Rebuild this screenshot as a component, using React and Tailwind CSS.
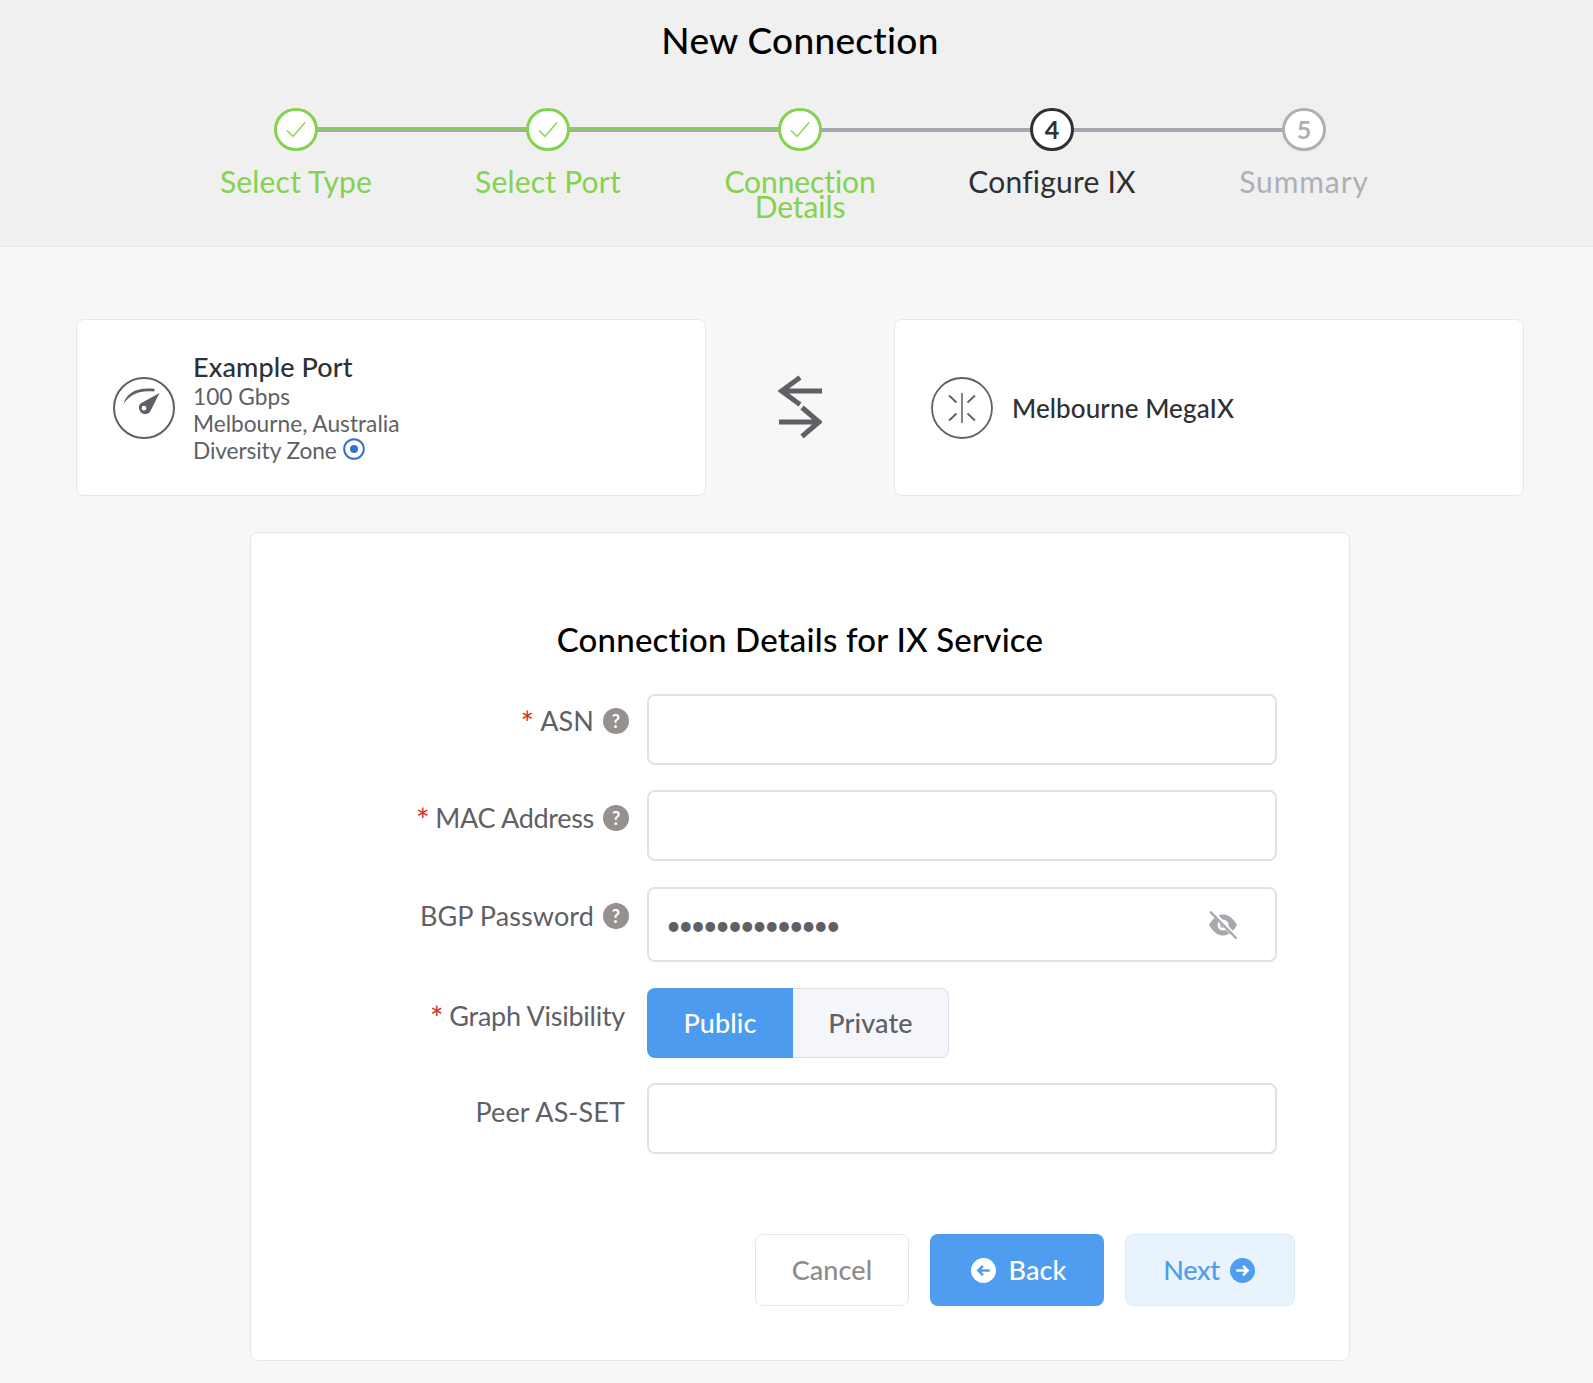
import React from "react";

function Check() {
  return (
    <svg width="20" height="18" viewBox="0 0 20 18" fill="none" stroke="#85d24f" strokeWidth="1.4">
      <path d="M1 9.5 L7 15.5 L19 1.5" />
    </svg>
  );
}

function Step({ label, state, n, line, track = "tracking-[0.2px]" }) {
  const circle =
    state === "done"
      ? "border-[#85d24f]"
      : state === "active"
      ? "border-[#2f3033] text-[#2f3033]"
      : "border-[#aeb0b8] text-[#aeb0b8]";
  const text =
    state === "done" ? "text-[#85d24f]" : state === "active" ? "text-[#2f3033]" : "text-[#aeb0b8]";
  return (
    <div className="relative w-[252px] flex flex-col items-center">
      {line && (
        <>
          <div className="absolute left-[126px] top-[20px] h-[4px] w-[252px] bg-[#a6a8b0]" />
          {line === "done" && <div className="absolute left-[126px] top-[19px] h-[3px] w-[252px] bg-[#85d24f]" />}
        </>
      )}
      <div className={`relative z-10 w-[44px] h-[43px] rounded-full border-[3px] bg-white flex items-center justify-center text-[25px] font-bold ${circle}`}>
        {state === "done" ? <Check /> : n}
      </div>
      <div className={`mt-[18px] w-[170px] text-center text-[30px] leading-[25px] ${track} ${text}`}>{label}</div>
    </div>
  );
}

function Gauge() {
  return (
    <svg width="62" height="62" viewBox="0 0 62 62" fill="none" className="shrink-0">
      <circle cx="31" cy="31" r="30" stroke="#5f6066" strokeWidth="2" />
      <path d="M10.5 27 C13 17 23 9.5 42 12 L41 14.5 C27 13 17 17 10.5 27 Z" fill="#5f6066" />
      <path fillRule="evenodd" d="M46.5 16 L37 35 A6 6 0 1 1 27.5 26.5 Z M31 28.8 A2.4 2.4 0 1 0 31 33.6 A2.4 2.4 0 1 0 31 28.8 Z" fill="#5f6066" />
    </svg>
  );
}

function IxIcon() {
  return (
    <svg width="62" height="62" viewBox="0 0 62 62" fill="none" className="shrink-0">
      <circle cx="31" cy="31" r="30" stroke="#5f6066" strokeWidth="1.8" />
      <path d="M31 16 V46" stroke="#77787e" strokeWidth="1.8" />
      <path d="M18 18.5 L25.5 25.5 M44 18.5 L36.5 25.5 M18 43.5 L25.5 36.5 M44 43.5 L36.5 36.5" stroke="#5f6066" strokeWidth="1.8" />
    </svg>
  );
}

function Arrows() {
  return (
    <svg width="44" height="64" viewBox="0 0 44 64" fill="none" stroke="#5f6066" strokeWidth="5" className="mb-[3px]">
      <path d="M3.5 17 H44 M22 3.5 L3.5 17 L22 30.5" />
      <path d="M1 48 H41 M24 33.5 L41 48 L24 62.5" />
    </svg>
  );
}

function Help() {
  return (
    <span className="w-[26px] h-[26px] shrink-0 -mr-[4px] rounded-full bg-[#96908e] text-white text-[18px] font-bold flex items-center justify-center leading-none">?</span>
  );
}

function Field({ label, required, help, top, track = "tracking-[0.1px]", children }) {
  return (
    <div className="flex">
      <div className={`w-[374px] shrink-0 flex justify-end items-center gap-[9px] h-[26px] text-[27px] leading-[26px] text-[#5f6066] ${track} ${top}`}>
        <span className="whitespace-nowrap flex items-center">
          {required && <span className="text-[#d8322a] text-[32px] leading-none mt-[4px] mr-[6px]">*</span>}
          {label}
        </span>
        {help && <Help />}
      </div>
      <div className="ml-[22px] w-[630px]">{children}</div>
    </div>
  );
}

function TextBox() {
  return <input className="block w-full h-[71px] rounded-[8px] border-2 border-[#e0e1e8] bg-white outline-none" />;
}

function EyeOff() {
  return (
    <svg width="30" height="28" viewBox="0 0 30 28" fill="none">
      <path d="M1 14 C6 5.5 11 3.5 15 3.5 C19 3.5 24 5.5 29 14 C24 22.5 19 24.5 15 24.5 C11 24.5 6 22.5 1 14 Z" fill="#a6a8ae" />
      <circle cx="15" cy="14" r="5.5" fill="white" />
      <circle cx="15" cy="14" r="2.8" fill="#a6a8ae" />
      <path d="M3.5 0 L28.5 27" stroke="white" strokeWidth="4.5" />
      <path d="M2 0.5 L28.5 27.5" stroke="#a6a8ae" strokeWidth="2.4" />
    </svg>
  );
}

function CircleArrow({ dir, bg, fg }) {
  const d = dir === "left" ? "M18 12 H7 M11.5 7.5 L7 12 L11.5 16.5" : "M6 12 H17 M12.5 7.5 L17 12 L12.5 16.5";
  return (
    <svg width="25" height="25" viewBox="0 0 24 24" fill="none">
      <circle cx="12" cy="12" r="12" fill={bg} />
      <path d={d} stroke={fg} strokeWidth="2.4" />
    </svg>
  );
}

export default function App() {
  return (
    <div className="min-h-screen bg-[#f7f7f8] font-['Lato','Liberation_Sans',sans-serif] overflow-hidden">
      <header className="h-[247px] bg-[#f0f0f1] border-b border-[#e6e7ee] pl-[7px] flex flex-col items-center">
        <h1 className="mt-[17px] h-[46px] text-[37px] leading-[46px] font-medium text-black tracking-[0.3px]">New Connection</h1>
        <div className="mt-[45px] flex justify-center">
          <Step label="Select Type" state="done" line="done" />
          <Step label="Select Port" state="done" line="done" />
          <Step label="Connection Details" state="done" line="grey" track="tracking-[-0.1px]" />
          <Step label="Configure IX" state="active" n="4" line="grey" />
          <Step label="Summary" state="todo" n="5" track="tracking-[0.9px]" />
        </div>
      </header>
      <main className="pl-[76px] pr-[69px] pt-[72px] pb-[23px]">
        <div className="flex items-center justify-between">
          <div className="w-[630px] h-[177px] rounded-[8px] border border-[#e6e7ee] bg-white flex items-center pl-[36px] gap-[18px]">
            <Gauge />
            <div className="text-[22.7px] leading-[27px] text-[#5f6066] mt-[2px]">
              <div className="text-[27px] font-medium text-[#2f3033] tracking-[0.1px] -mt-[1px] mb-[3px]">Example Port</div>
              <div>100 Gbps</div>
              <div>Melbourne, Australia</div>
              <div className="flex items-center gap-[6px] tracking-[-0.1px]">
                Diversity Zone
                <svg width="22" height="22" viewBox="0 0 22 22" fill="none" className="-mt-[2px]">
                  <circle cx="11" cy="11" r="9.8" stroke="#2f74d0" strokeWidth="2" />
                  <circle cx="11" cy="11" r="4" fill="#2f74d0" />
                </svg>
              </div>
            </div>
          </div>
          <Arrows />
          <div className="w-[630px] h-[177px] rounded-[8px] border border-[#e6e7ee] bg-white flex items-center pl-[36px] gap-[19px]">
            <IxIcon />
            <span className="text-[26px] font-medium text-[#2f3033] tracking-[0.1px] mt-[2px]">Melbourne MegaIX</span>
          </div>
        </div>
        <section className="ml-[174px] mt-[36px] w-[1100px] h-[829px] rounded-[8px] border border-[#e6e7ee] bg-white pt-[86px]">
          <h2 className="h-[44px] text-center -mt-[2px] mb-[2px] text-[33px] leading-[44px] font-medium text-black tracking-[0.2px]">Connection Details for IX Service</h2>
          <div className="mt-[33px] flex flex-col gap-[26px]">
            <Field label="ASN" required help top="mt-[14px]"><TextBox /></Field>
            <div className="-mt-[1px]">
              <Field label="MAC Address" required help top="mt-[15px]" track="tracking-[-0.3px]"><TextBox /></Field>
            </div>
            <Field label="BGP Password" help top="mt-[16px]">
              <div className="relative">
                <input
                  type="password"
                  readOnly
                  value="12345678901234"
                  className="block w-full h-[75px] rounded-[8px] border-2 border-[#e0e1e8] bg-white outline-none pl-[17px] pr-[60px] pt-[1px] text-[26px] tracking-[-2.8px] text-[#5f6066]"
                />
                <div className="absolute right-[39px] top-[24px]"><EyeOff /></div>
              </div>
            </Field>
            <Field label="Graph Visibility" required top="mt-[15px]" track="tracking-[-0.25px]">
              <div className="flex h-[70px] text-[27px] tracking-[0.1px] font-medium">
                <div className="w-[146px] bg-[#4c9bef] text-white rounded-l-[8px] flex items-center justify-center">Public</div>
                <div className="w-[156px] bg-[#f5f6fb] text-[#5f6066] border border-l-0 border-[#dfe0e8] rounded-r-[8px] flex items-center justify-center">Private</div>
              </div>
            </Field>
            <div className="-mt-[1px]">
              <Field label="Peer AS-SET" top="mt-[16px]"><TextBox /></Field>
            </div>
          </div>
          <div className="mt-[80px] pr-[54px] flex justify-end gap-[21px] text-[27px] font-medium tracking-[0.1px]">
            <button className="w-[154px] h-[72px] rounded-[8px] border border-[#e8e8ec] bg-white text-[#8f8b89]">Cancel</button>
            <button className="w-[174px] h-[72px] pl-[4px] rounded-[8px] bg-[#4e9df0] text-white flex items-center justify-center gap-[12px]">
              <CircleArrow dir="left" bg="#ffffff" fg="#4e9df0" />
              Back
            </button>
            <button className="w-[170px] h-[72px] pr-[2px] rounded-[8px] border border-[#d9ebfb] bg-[#e8f3fd] text-[#4e9df0] flex items-center justify-center gap-[10px] tracking-[-0.3px]">
              Next
              <CircleArrow dir="right" bg="#4e9df0" fg="#ffffff" />
            </button>
          </div>
        </section>
      </main>
    </div>
  );
}
